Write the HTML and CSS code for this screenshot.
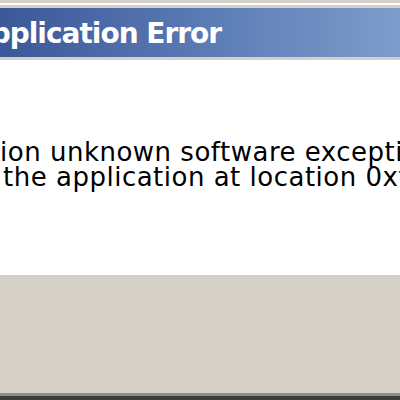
FILE: index.html
```html
<!DOCTYPE html>
<html lang="en">
<head>
  <meta charset="UTF-8">
  <title>Application Error</title>
  <link rel="stylesheet" href="styles.css">
</head>
<body>
  <div class="dialog">
    <div class="frame-top"></div>
    <div class="titlebar">
      <span class="title">Application Error</span>
    </div>
    <div class="frame-line"></div>
    <div class="content">
      <p class="message">
        The exception unknown software exception (0xc0000417)<br>
        occurred in the application at location 0xffffffff.
      </p>
    </div>
    <div class="footer"></div>
    <div class="frame-bottom"></div>
  </div>
</body>
</html>
```

FILE: styles.css
```css
html, body {
  margin: 0;
  padding: 0;
  width: 400px;
  height: 400px;
  overflow: hidden;
  background: #d4d0c8;
}

.dialog {
  display: flex;
  flex-direction: column;
  width: 400px;
  height: 400px;
  overflow: hidden;
  font-family: "DejaVu Sans", Verdana, sans-serif;
}

.frame-top {
  height: 8px;
  background: linear-gradient(#d4d0c8 0 3px, #ffffff 3px 5px, #d4d0c8 5px);
}

.titlebar {
  height: 49px;
  display: flex;
  align-items: center;
  background: linear-gradient(to right, #3b5898, #5a7ab4 50%, #7d9dcc);
  overflow: hidden;
}

.title {
  margin: 2px 0 0 -30px;
  color: #fff;
  font-weight: bold;
  font-size: 28px;
  letter-spacing: -1px;
  white-space: nowrap;
}

.frame-line {
  height: 3px;
  background: #d4d0c8;
}

.content {
  height: 215px;
  background: #fff;
  overflow: hidden;
}

.message {
  margin: 80px 0 0 -157px;
  text-indent: 8px;
  font-size: 26px;
  line-height: 25px;
  letter-spacing: 0.5px;
  color: #000;
  white-space: nowrap;
}

.footer {
  flex: 1;
  background: #d4d0c8;
}

.frame-bottom {
  height: 7px;
  background: linear-gradient(#8c8c8c 0 3px, #3c3c3c 3px);
}
```
